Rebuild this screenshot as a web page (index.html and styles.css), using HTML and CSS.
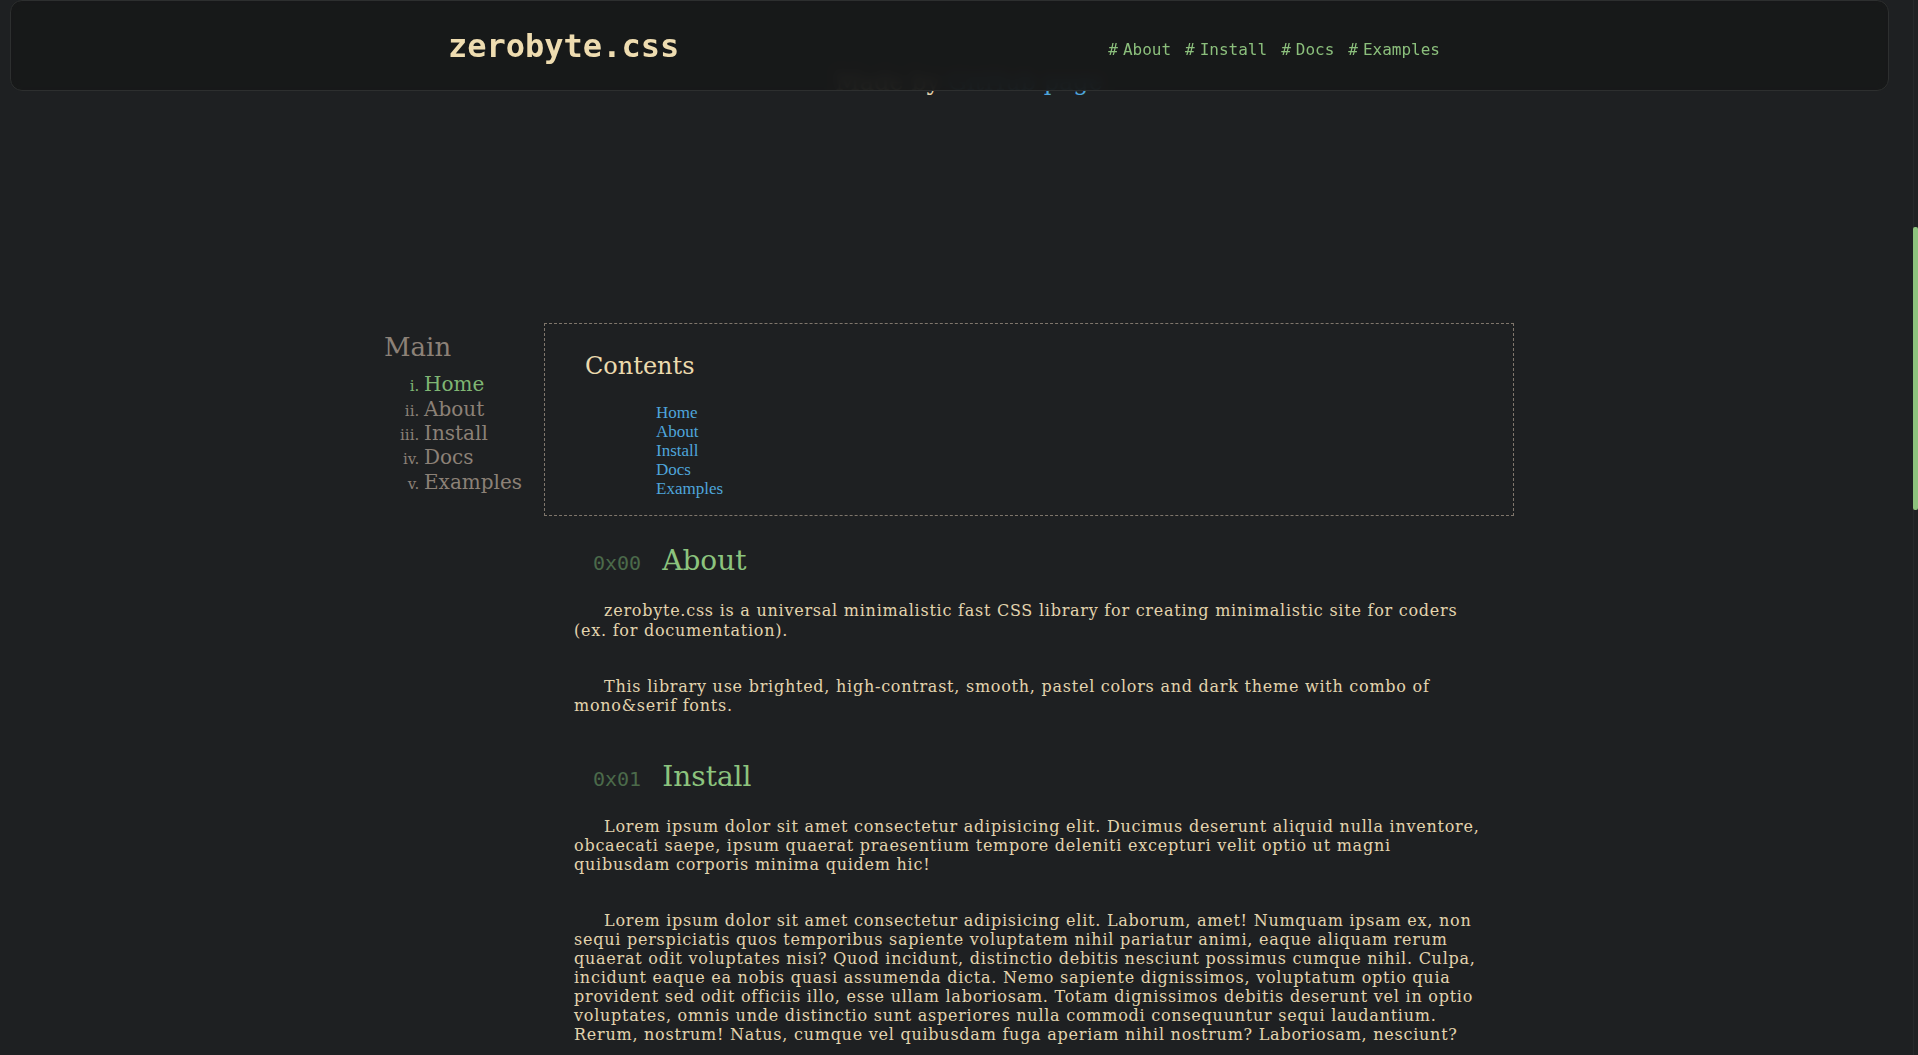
FILE: index.html
```html
<!DOCTYPE html>
<html lang="en">
<head>
<meta charset="utf-8">
<title>zerobyte.css</title>
<link rel="stylesheet" href="styles.css">
</head>
<body>
<header class="topbar">
  <div class="topbar-inner">
    <a class="logo" href="#home">zerobyte.css</a>
    <nav class="topnav">
      <a href="#about"><span class="hash">#</span>About</a>
      <a href="#install"><span class="hash">#</span>Install</a>
      <a href="#docs"><span class="hash">#</span>Docs</a>
      <a href="#examples"><span class="hash">#</span>Examples</a>
    </nav>
  </div>
</header>

<div class="scroll-track" aria-hidden="true"><div class="scroll-thumb"></div></div>

<section class="hero" id="home">
  <h1 class="hero-title">zerobyte.css</h1>
  <p class="hero-sub">Made by <a href="#">GitHub page</a></p>
</section>

<div class="layout">
  <aside class="sidebar">
    <h3 class="side-title">Main</h3>
    <ol class="side-list">
      <li class="active"><a href="#home">Home</a></li>
      <li><a href="#about">About</a></li>
      <li><a href="#install">Install</a></li>
      <li><a href="#docs">Docs</a></li>
      <li><a href="#examples">Examples</a></li>
    </ol>
  </aside>

  <main class="content">
    <div class="toc">
      <h2 class="toc-title">Contents</h2>
      <ul class="toc-list">
        <li><a href="#home">Home</a></li>
        <li><a href="#about">About</a></li>
        <li><a href="#install">Install</a></li>
        <li><a href="#docs">Docs</a></li>
        <li><a href="#examples">Examples</a></li>
      </ul>
    </div>

    <section class="section" id="about">
      <h2 class="sec-title"><span class="hex">0x00</span>About</h2>
      <p>zerobyte.css is a universal minimalistic fast CSS library for creating minimalistic site for coders (ex. for documentation).</p>
      <p>This library use brighted, high-contrast, smooth, pastel colors and dark theme with combo of mono&amp;serif fonts.</p>
    </section>

    <section class="section" id="install">
      <h2 class="sec-title"><span class="hex">0x01</span>Install</h2>
      <p>Lorem ipsum dolor sit amet consectetur adipisicing elit. Ducimus deserunt aliquid nulla inventore, obcaecati saepe, ipsum quaerat praesentium tempore deleniti excepturi velit optio ut magni quibusdam corporis minima quidem hic!</p>
      <p>Lorem ipsum dolor sit amet consectetur adipisicing elit. Laborum, amet! Numquam ipsam ex, non sequi perspiciatis quos temporibus sapiente voluptatem nihil pariatur animi, eaque aliquam rerum quaerat odit voluptates nisi? Quod incidunt, distinctio debitis nesciunt possimus cumque nihil. Culpa, incidunt eaque ea nobis quasi assumenda dicta. Nemo sapiente dignissimos, voluptatum optio quia provident sed odit officiis illo, esse ullam laboriosam. Totam dignissimos debitis deserunt vel in optio voluptates, omnis unde distinctio sunt asperiores nulla commodi consequuntur sequi laudantium. Rerum, nostrum! Natus, cumque vel quibusdam fuga aperiam nihil nostrum? Laboriosam, nesciunt?</p>
      <p>Lorem ipsum dolor sit amet consectetur adipisicing elit. Quis, eveniet. Dolorum, quibusdam ipsa! Sequi, voluptate eius. Ab, ipsam dignissimos consequatur ut nihil minima.</p>
    </section>

    <section class="section" id="docs">
      <h2 class="sec-title"><span class="hex">0x02</span>Docs</h2>
      <p>Lorem ipsum dolor sit amet consectetur adipisicing elit. Nesciunt, illum. Doloribus possimus deleniti, quo corrupti fugiat recusandae, aspernatur aliquid ipsum eos laudantium minima nam.</p>
      <p>Lorem ipsum dolor sit amet consectetur adipisicing elit. Sed quas dolore harum. Laudantium debitis consequuntur, aut facere perferendis dolorum velit inventore ipsam quos cumque placeat.</p>
      <p>Lorem ipsum dolor sit amet consectetur adipisicing elit. Fuga quasi impedit, assumenda iusto praesentium eveniet natus expedita quia reiciendis odit.</p>
    </section>

    <section class="section" id="examples">
      <h2 class="sec-title"><span class="hex">0x03</span>Examples</h2>
      <p>Lorem ipsum dolor sit amet consectetur adipisicing elit. Tempora, sunt. Accusantium explicabo veritatis quas architecto, quidem nostrum sed non dolorum?</p>
      <p>Lorem ipsum dolor sit amet consectetur adipisicing elit. Omnis cupiditate voluptatibus aliquam numquam dolores tempora molestiae, aperiam ipsum amet.</p>
    </section>
  </main>
</div>
<script src="script.js"></script>
</body>
</html>
```

FILE: styles.css
```css
html {
  scroll-behavior: auto;
  scrollbar-width: none;
}

::-webkit-scrollbar {
  width: 0;
  height: 0;
}

body {
  margin: 0 5px 0 0;
  background: #1e2022;
  color: #e3d4ae;
  font-family: "DejaVu Serif", serif;
}

a {
  text-decoration: none;
}

/* drawn scrollbar (overlay on the right edge) */
.scroll-track {
  position: fixed;
  top: 0;
  right: 0;
  bottom: 0;
  width: 5px;
  background: #1f2123;
  box-shadow: inset 1px 0 0 #26282a;
  z-index: 20;
}

.scroll-thumb {
  position: absolute;
  top: 227px;
  left: 0;
  width: 5px;
  height: 283px;
  background: #8dc17d;
  border-radius: 2px;
}

/* top bar */
.topbar {
  position: fixed;
  top: 0;
  left: 10px;
  right: 29px;
  height: 91px;
  box-sizing: border-box;
  display: flex;
  align-items: center;
  background: rgba(23, 24, 24, 0.94);
  backdrop-filter: blur(6px);
  border: 1px solid #2d2f2f;
  border-radius: 12px;
  z-index: 10;
}

.topbar-inner {
  width: 1003px;
  margin: 0 auto;
  display: flex;
  justify-content: space-between;
  align-items: center;
}

.logo {
  font: bold 32px "DejaVu Sans Mono", "Liberation Mono", monospace;
  color: #eedcb0;
}

.topnav {
  display: flex;
  gap: 14px;
  margin-right: 11px;
  padding-top: 8px;
}

.topnav a {
  font: 16px "DejaVu Sans Mono", "Liberation Mono", monospace;
  color: #8bbf7c;
}

.hash {
  margin-right: 5px;
}

/* hero (scrolled mostly out of view) */
.hero {
  height: 100vh;
  box-sizing: border-box;
  display: flex;
  flex-direction: column;
  justify-content: flex-end;
  align-items: center;
  padding: 0 0 112px 25px;
}

.hero-title {
  font: bold 64px "DejaVu Sans Mono", monospace;
  color: #eedcb0;
  margin: 0 0 420px;
}

.hero-sub {
  font-size: 24px;
  line-height: 1.2;
  margin: 0;
  color: #e3d4ae;
}

.hero-sub a {
  color: #4ea5db;
}

/* layout */
.layout {
  width: 1145px;
  box-sizing: border-box;
  padding-right: 16px;
  margin: 114px auto 0;
  display: grid;
  grid-template-columns: 160px 970px;
  min-height: 2764px;
  align-items: start;
}

.sidebar {
  padding-top: 9px;
  color: #8c8177;
}

.side-title {
  font-size: 26px;
  font-weight: normal;
  line-height: 1.2;
  margin: 0 0 9px;
  color: #8c8177;
}

.side-list {
  margin: 0;
  padding-left: 40px;
  list-style: lower-roman;
}

.side-list li {
  font-size: 20px;
  line-height: 24.4px;
  color: #8c8177;
}

.side-list li::marker {
  font-size: 15px;
}

.side-list a {
  color: #8c8177;
}

.side-list li.active,
.side-list li.active a {
  color: #7fb673;
}

/* table of contents */
.toc {
  border: 1px dashed #7f766c;
  padding: 28px 40px 17px;
  margin-bottom: 19.5px;
}

.toc-title {
  font-size: 24px;
  font-weight: normal;
  line-height: 1.2;
  margin: 0 0 22.6px;
  color: #ebdaae;
}

.toc-list {
  list-style: none;
  margin: 0;
  padding-left: 71px;
  font: 17px/19px "Liberation Serif", serif;
}

.toc-list a {
  color: #4ea5db;
}

/* sections */
.section {
  padding: 8px 25px 0 30px;
}

.sec-title {
  display: flex;
  align-items: baseline;
  gap: 21px;
  font-size: 28px;
  font-weight: normal;
  line-height: 1.2;
  margin: 0 0 24px;
  padding-left: 19px;
  color: #8cc47e;
}

.hex {
  font: 20px "DejaVu Sans Mono", "Liberation Mono", monospace;
  color: #4b6a4a;
}

.section p {
  font-size: 16px;
  line-height: 1.19;
  letter-spacing: 0.75px;
  text-indent: 30px;
  margin: 0 0 37px;
  color: #e3d4ae;
}
```

FILE: script.js
```js
if ('scrollRestoration' in history) {
  history.scrollRestoration = 'manual';
}
window.scrollTo(0, 846);
```
